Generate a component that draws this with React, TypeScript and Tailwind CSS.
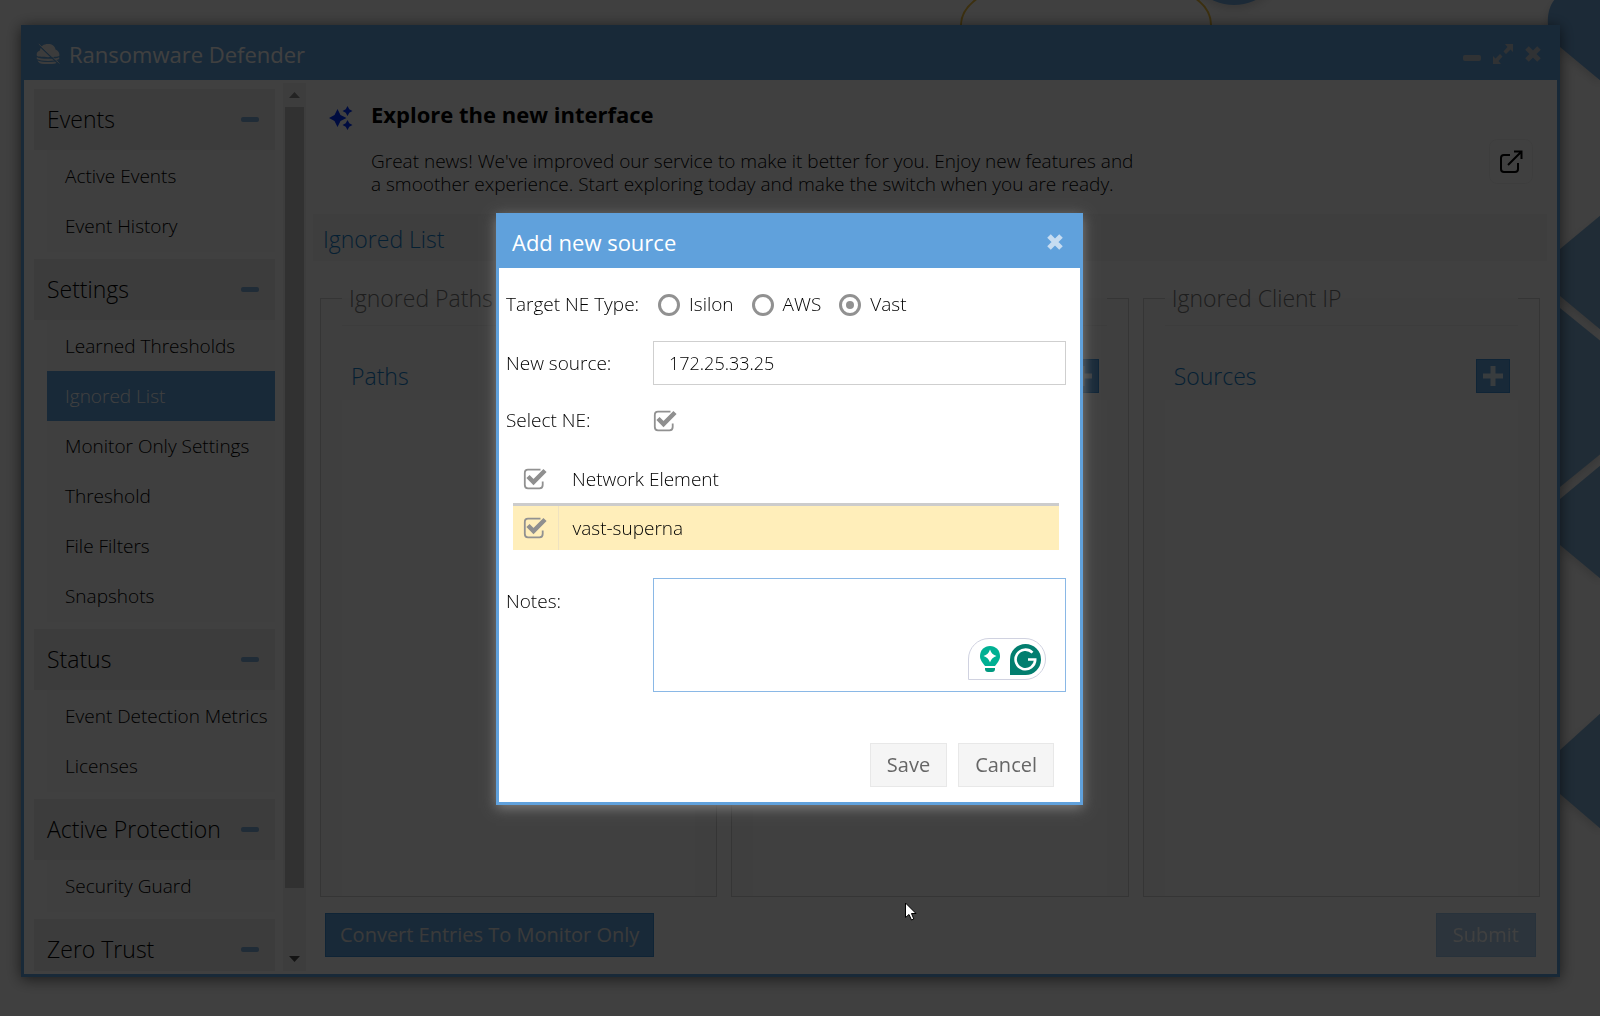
import type { ReactNode } from "react";

type Section = {
  title: string;
  items: string[];
};

type Panel = {
  legend: string;
  heading: string;
  addLabel: string;
};

const sections: Section[] = [
  { title: "Events", items: ["Active Events", "Event History"] },
  {
    title: "Settings",
    items: [
      "Learned Thresholds",
      "Ignored List",
      "Monitor Only Settings",
      "Threshold",
      "File Filters",
      "Snapshots",
    ],
  },
  { title: "Status", items: ["Event Detection Metrics", "Licenses"] },
  { title: "Active Protection", items: ["Security Guard"] },
  { title: "Zero Trust", items: [] },
];

const panels: Panel[] = [
  { legend: "Ignored Paths", heading: "Paths", addLabel: "Add path" },
  { legend: "", heading: "", addLabel: "Add entry" },
  { legend: "Ignored Client IP", heading: "Sources", addLabel: "Add source" },
];

const neTypes = ["Isilon", "AWS", "Vast"];

function cx(...a: (string | false | null | undefined)[]) {
  return a.filter(Boolean).join(" ");
}

function Backdrop() {
  return (
    <>
      {/* Shapes along the top edge */}
      <svg
        className="absolute top-0 left-[940px] h-[60px] w-[360px]"
        viewBox="0 0 360 60"
        fill="none"
        aria-hidden="true"
      >
        <path d="M21 40V25C21 13 28 5 38 -2M271 40V25C271 13 265 5 255 -2" stroke="#f0c040" strokeWidth="2" />
        <circle cx="294" cy="-46" r="51" fill="#70a8dc" className="drop-shadow-lg" />
      </svg>
      {/* Hexagons behind the right edge */}
      <svg
        className="absolute top-0 right-0 h-[900px] w-[60px] drop-shadow-lg"
        viewBox="0 0 60 900"
        fill="#80b0d8"
        aria-hidden="true"
      >
        <path d="M16 -2C10 4 7 14 8 25L20 47L62 82V-2Z" fill="#70a8dc" />
        <path d="M62 214L20 249L10 273L20 296L62 331Z" />
        <path d="M20 308L62 342V453L20 487Z" />
        <path d="M62 464L20 499L10 522L20 545L62 580Z" />
        <path d="M62 712L20 750L10 772L20 794L62 830Z" />
      </svg>
    </>
  );
}

function LogoIcon() {
  return (
    <svg className="h-6 w-6" viewBox="0 0 24 24" fill="#f0f0f0" aria-hidden="true">
      <path d="M1 14C0 11 2 9 4 8.500C4.500 4 8 2 12 2C16 2 19 4 19.500 7.500C22 8.500 24 11 23.300 14C20 15.500 4 15.500 1 14Z" />
      <path d="M0.800 15.200C5 17.300 19 17.300 23.200 15.200V17C19 19.500 5 19.500 0.800 17Z" />
      <path d="M1.500 18.500C7 20.500 17 20.500 22.500 18.500C21.500 21 19 22 16 22H8C5 22 2.500 21 1.500 18.500Z" />
      <path d="M2 2.500L23 22.500" stroke="#60a3de" strokeWidth="1.200" />
      <path d="M2.800 2L23.500 21.500" stroke="#f0f0f0" strokeWidth="0.800" />
    </svg>
  );
}

function CloseIcon() {
  return (
    <svg className="h-4 w-4" viewBox="0 0 16 16" stroke="currentColor" strokeWidth="5" aria-hidden="true">
      <path d="M2 2L14 14M14 2L2 14" />
    </svg>
  );
}

function ExpandIcon() {
  return (
    <svg className="h-5 w-5" viewBox="0 0 20 20" fill="currentColor" aria-hidden="true">
      <path d="M12 0H20V8L17.500 5.500L13 10L10.500 7.500L14.500 3Z" />
      <path d="M8 20H0V12L2.500 14.500L7 10L9.500 12.500L5.500 17Z" />
    </svg>
  );
}

function Sidebar() {
  return (
    <aside className="flex w-[282px] shrink-0 pt-[3px] pb-[3px] pl-[10px]">
      <nav className="flex min-h-0 flex-1 flex-col gap-[7px] overflow-hidden pt-[6px]">
        {sections.map((section) => (
          <div key={section.title} className="shrink-0">
            <div className="flex h-[61px] items-center justify-between bg-[#efefef] pr-4 pl-[13px]">
              <h2 className="text-[23px] font-light">{section.title}</h2>
              <button aria-label={"Collapse " + section.title} className="h-[5px] w-[18px] rounded-xs bg-[#80aedc]" />
            </div>
            {section.items.length > 0 && (
              <ul className="ml-[13px] bg-[#f9f9f9] py-px">
                {section.items.map((item) => (
                  <li key={item}>
                    <a
                      href="#"
                      className={cx(
                        "flex h-[50px] items-center pl-[18px] text-[19px] font-light whitespace-nowrap",
                        item === "Ignored List" && "bg-[#60a3de] text-white"
                      )}
                    >
                      {item}
                    </a>
                  </li>
                ))}
              </ul>
            )}
          </div>
        ))}
      </nav>
      {/* Scrollbar */}
      <div className="ml-2 flex w-[23px] flex-col items-center bg-[#f4f4f4]" aria-hidden="true">
        <svg className="h-6 w-[11px] shrink-0" viewBox="0 0 11 24">
          <path d="M0 15L5.500 9L11 15Z" fill="#8b8b8b" />
        </svg>
        <div className="flex w-full flex-1 flex-col items-center">
          <div className="h-[93%] w-[19px] bg-[#c1c1c1]" />
        </div>
        <svg className="h-6 w-[11px] shrink-0" viewBox="0 0 11 24">
          <path d="M0 9L5.500 15L11 9Z" fill="#505050" />
        </svg>
      </div>
    </aside>
  );
}

function Announcement() {
  return (
    <section className="flex items-start pt-[14px] pr-6 pl-4">
      <svg className="mt-3 h-6 w-6 shrink-0" viewBox="0 0 24 24" fill="#0033ff" aria-hidden="true">
        <path d="M8.500 3L11.500 9L17.500 12L11.500 15L8.500 21L5.500 15L0 12L5.500 9Z" />
        <path d="M18.500 0L20.300 3.200L23.500 5L20.300 6.800L18.500 10L16.700 6.800L13.500 5L16.700 3.200Z" />
        <path d="M18.500 14L20.300 17.200L23.500 19L20.300 20.800L18.500 24L16.700 20.800L13.500 19L16.700 17.200Z" />
      </svg>
      <div className="ml-[18px] flex-1">
        <h2 className="text-[22px] leading-10 font-bold">Explore the new interface</h2>
        <p className="mt-4 text-[19px] leading-[23px] font-light">
          Great news! We've improved our service to make it better for you. Enjoy new features and
          <br />a smoother experience. Start exploring today and make the switch when you are ready.
        </p>
      </div>
      <button
        aria-label="Open the new interface"
        className="mt-[45px] flex h-[45px] w-11 items-center justify-center rounded-lg border border-[#f4f4f4]"
      >
        <svg className="h-6 w-6" viewBox="0 0 24 24" fill="none" stroke="black" strokeWidth="2" aria-hidden="true">
          <path d="M11 5H5Q2 5 2 8V19Q2 22 5 22H16Q19 22 19 19V13" />
          <path d="M15 1.500H22.500V9M22.500 1.500L9 15" />
        </svg>
      </button>
    </section>
  );
}

function IgnoredPanel({ legend, heading, addLabel }: Panel) {
  return (
    <fieldset className="flex min-w-0 flex-1 flex-col border border-[#d4d4d4] bg-[#fafafa] px-[21px]">
      <legend className="h-14 w-full border-b border-[#efefef] pl-[7px] text-[23px] leading-[56px] font-light text-[#777777]">
        {legend}
      </legend>
      <div className="flex h-[74px] items-end justify-between pr-2 pb-[7px] pl-[9px]">
        <h3 className="text-[23px] leading-[34px] font-light text-[#157fcc]">{heading}</h3>
        <button
          aria-label={addLabel}
          className="flex h-[34px] w-[34px] items-center justify-center border border-[#3f8fd5] bg-[#60a3de] text-white/80"
        >
          <svg className="h-5 w-5" viewBox="0 0 20 20" stroke="currentColor" strokeWidth="5" aria-hidden="true">
            <path d="M10 0V20M0 10H20" />
          </svg>
        </button>
      </div>
      <div className="flex-1 bg-white" />
    </fieldset>
  );
}

function CheckBox({ label, id }: { label: string; id?: string }) {
  return (
    <span className="relative flex h-[22px] w-6">
      <input id={id} type="checkbox" defaultChecked aria-label={label} className="h-[22px] w-6 appearance-none" />
      <svg className="pointer-events-none absolute inset-0 h-[22px] w-6" viewBox="0 0 24 22" fill="none" aria-hidden="true">
        <path
          d="M17.500 1.700H5Q1.800 1.700 1.800 5V17Q1.800 20.300 5 20.300H16.500Q19.700 20.300 19.700 17V13.500"
          stroke="#919191"
          strokeWidth="1.800"
        />
        <path d="M5 8.500L10.500 14L22 2.500" stroke="#8f8f8f" strokeWidth="4.500" />
      </svg>
    </span>
  );
}

function FormRow({ children, className }: { children: ReactNode; className?: string }) {
  return <div className={cx("grid grid-cols-[147px_1fr] items-center pr-[14px] pl-[7px]", className)}>{children}</div>;
}

function AddSourceDialog() {
  return (
    <div
      role="dialog"
      aria-modal="true"
      aria-labelledby="dialog-title"
      className="w-[587px] border-[3px] border-[#60a1dc] bg-white shadow-[0_3px_12px_#808080]"
    >
      <header className="flex h-[52px] items-center justify-between bg-[#60a1dc] pr-[17px] pl-[13px]">
        <h1 id="dialog-title" className="text-[22px] text-white">
          Add new source
        </h1>
        <button aria-label="Close dialog" className="text-[#c6dcf1]">
          <CloseIcon />
        </button>
      </header>

      <form className="pb-[15px] text-[19px] font-light">
        <FormRow className="h-[73px]">
          <span className="whitespace-nowrap">Target NE Type:</span>
          <div className="flex items-center gap-[18px] pl-[5px]">
            {neTypes.map((type) => (
              <label key={type} className="flex items-center gap-[9px]">
                <input
                  type="radio"
                  name="ne-type"
                  defaultChecked={type === "Vast"}
                  className="flex h-[22px] w-[22px] appearance-none items-center justify-center rounded-full border-[3px] border-[#919191] checked:before:h-2 checked:before:w-2 checked:before:rounded-full checked:before:bg-[#919191]"
                />
                {type}
              </label>
            ))}
          </div>
        </FormRow>

        <FormRow>
          <label htmlFor="new-source">New source:</label>
          <input
            id="new-source"
            type="text"
            defaultValue="172.25.33.25"
            className="h-11 w-full border border-[#cfcfcf] px-[15px] text-[18px] outline-none"
          />
        </FormRow>

        <FormRow className="h-[71px]">
          <label htmlFor="select-ne">Select NE:</label>
          <CheckBox id="select-ne" label="Select NE" />
        </FormRow>

        <div className="pr-[21px] pl-[14px]">
          <table className="w-full text-left">
            <thead>
              <tr className="h-[48px] border-b-[3px] border-[#cccccc]">
                <th className="w-[45px] pl-[10px]">
                  <CheckBox label="Select all" />
                </th>
                <th className="pl-[14px] font-light">Network Element</th>
              </tr>
            </thead>
            <tbody>
              <tr className="h-[46px] bg-[#ffeeba]">
                <td className="border-r border-[#efe2c0] pl-[10px]">
                  <CheckBox label="Select vast-superna" />
                </td>
                <td className="pl-[14px]">vast-superna</td>
              </tr>
            </tbody>
          </table>
        </div>

        <FormRow className="mt-7 items-start">
          <label htmlFor="notes" className="pt-[9px]">
            Notes:
          </label>
          <div className="relative flex">
            <textarea id="notes" className="h-[114px] w-full resize-none border border-[#8ab8e6] p-3 outline-none" />
            <div className="absolute right-5 bottom-3 flex h-[42px] w-[78px] items-center justify-end gap-[9px] rounded-full rounded-bl-none border border-[#d0d2e0] bg-white pr-1">
              <svg className="h-7 w-[22px]" viewBox="0 0 22 28" aria-hidden="true">
                <path
                  d="M11 1C5.300 1 1 5.300 1 11C1 15 3.500 18 6 21H16C18.500 18 21 15 21 11C21 5.300 16.700 1 11 1Z"
                  fill="#00b093"
                />
                <path d="M6 23H16V24Q16 27 13 27H9Q6 27 6 24Z" fill="#009a80" />
                <path d="M11 4.500Q12.500 9.500 17.500 11Q12.500 12.500 11 17.500Q9.500 12.500 4.500 11Q9.500 9.500 11 4.500Z" fill="white" />
              </svg>
              <svg className="h-[31px] w-[31px]" viewBox="0 0 31 31" fill="none" aria-hidden="true">
                <path d="M15.500 0A15.500 15.500 0 0 1 15.500 31H0V15.500A15.500 15.500 0 0 1 15.500 0Z" fill="#027e6f" />
                <path d="M22.500 8.700A9.800 9.800 0 1 0 25.200 15.500H18" stroke="white" strokeWidth="2.600" />
              </svg>
            </div>
          </div>
        </FormRow>

        <div className="mt-[51px] flex justify-end gap-[11px] pr-[26px] text-[20px] font-normal text-[#666666]">
          <button type="button" className="h-11 border border-[#e8e8e8] bg-[#f5f5f5] px-4">
            Save
          </button>
          <button type="button" className="h-11 border border-[#e8e8e8] bg-[#f5f5f5] px-4">
            Cancel
          </button>
        </div>
      </form>
    </div>
  );
}

export default function App() {
  return (
    <div className="relative flex h-screen overflow-hidden bg-white pt-[25px] pr-10 pb-[39px] pl-[21px] font-['Open_Sans',sans-serif] text-black">
      <Backdrop />

      <div className="relative flex min-w-0 flex-1 flex-col border-[3px] border-[#60a3de] bg-white shadow-[0_2px_14px_rgba(0,0,0,0.6)]">
        <header className="flex h-[52px] shrink-0 items-center bg-[#60a3de] pr-4 pl-3 text-[#c0c8d0]">
          <LogoIcon />
          <h1 className="ml-[9px] flex-1 text-[22px] text-white">Ransomware Defender</h1>
          <div className="flex items-center gap-3">
            <button aria-label="Minimize" className="mt-2 h-[6px] w-[18px] rounded-xs bg-[#c0c8d0]" />
            <button aria-label="Maximize">
              <ExpandIcon />
            </button>
            <button aria-label="Close window">
              <CloseIcon />
            </button>
          </div>
        </header>

        <div className="flex min-h-0 flex-1">
          <Sidebar />
          <main className="flex min-w-0 flex-1 flex-col pl-[7px]">
            <Announcement />
            <h2 className="mt-[18px] mr-[10px] h-[47px] bg-[#f5f5f5] pl-[10px] text-[23px] leading-[50px] font-light text-[#157fcc]">
              Ignored List
            </h2>
            <div className="mt-[9px] mr-[17px] ml-[7px] flex min-h-0 flex-1 gap-[14px]">
              {panels.map((panel) => (
                <IgnoredPanel key={panel.addLabel} {...panel} />
              ))}
            </div>
            <footer className="flex justify-between pt-4 pr-[21px] pb-[17px] pl-3">
              <button className="h-11 border border-[#3f8fd5] bg-[#60a3de] px-[14px] text-[20px] text-[#e8e8e8]">
                Convert Entries To Monitor Only
              </button>
              <button
                disabled
                className="h-11 border border-[#3f8fd5] bg-[#60a3de] px-4 text-[20px] text-white opacity-50"
              >
                Submit
              </button>
            </footer>
          </main>
        </div>
      </div>

      <div className="fixed inset-0 flex items-center justify-center bg-black/75 pt-[2px] pr-[21px]">
        <AddSourceDialog />
      </div>

      {/* Mouse pointer */}
      <svg
        className="pointer-events-none absolute top-[902px] left-[905px] h-[19px] w-3"
        viewBox="0 0 12 19"
        fill="white"
        stroke="black"
        aria-hidden="true"
      >
        <path d="M0.500 1V15.500L4 12.500L6.500 18L8.800 17L6.500 11.500H11Z" />
      </svg>
    </div>
  );
}
